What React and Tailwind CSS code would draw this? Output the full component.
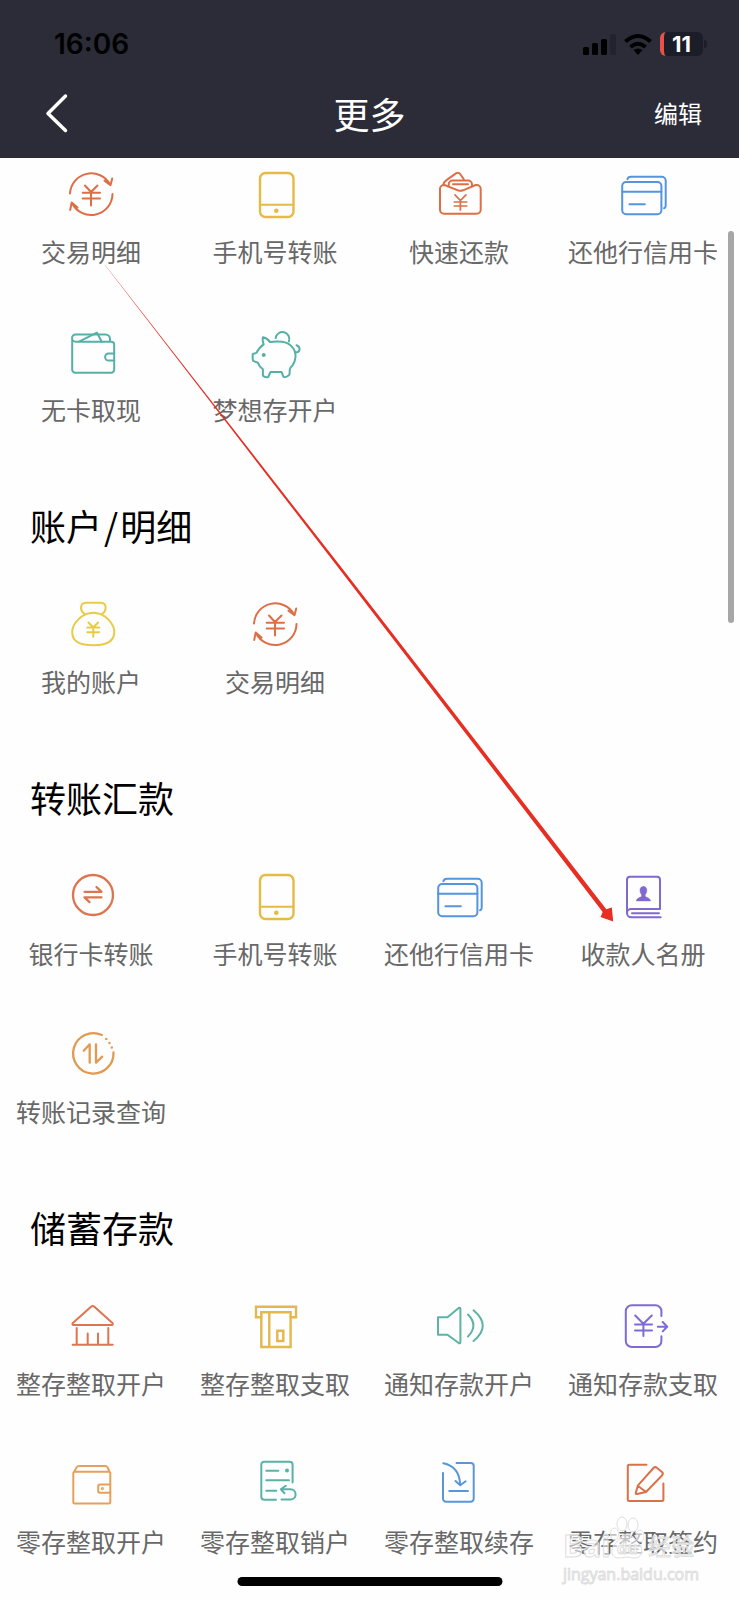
const Icon = ({ children, className }) => (
    <svg
        viewBox="0 0 48 48"
        className={`w-12 h-12 overflow-visible ${className}`}
        fill="none"
        stroke="currentColor"
        strokeWidth="2"
        strokeLinecap="round"
        strokeLinejoin="round"
        aria-hidden="true"
    >
        {children}
    </svg>
);

const TradeIcon = () => (
    <Icon className="text-[#dd6f47]">
        <path d="M3 22.5A21.3 21.3 0 0 1 43 13.5M45.2 7.5l-1.7 6.8-6-4.6" />
        <path d="M45.5 23A21.3 21.3 0 0 1 5 32M3.2 39l1.5-7.5 5.8 5" />
        <path d="M18 14.5l6 6.5 6.500-6.500M24 21v13.500M15.700 21.700H33M15.700 27.500H33" />
    </Icon>
);

const PhoneIcon = () => (
    <Icon className="text-[#e6bb45]">
        <rect x="9" y="2" width="33.500" height="44" rx="5.500" strokeWidth="2.400" />
        <path d="M9 33.700H42.500" />
        <circle cx="25.300" cy="39.700" r="1.300" fill="currentColor" />
    </Icon>
);

const RepayIcon = () => (
    <Icon className="text-[#dd6f47]">
        <path d="M9.500 14H9a4 4 0 0 0-4 4v20.700a4 4 0 0 0 4 4h32.700a4 4 0 0 0 4-4V18a4 4 0 0 0-4-4h-1L28 19.300q-2.600 1-5 0L9.500 14" />
        <path d="M13.700 15v-1.500a4 4 0 0 1 4-4H33a4 4 0 0 1 4 4V15" />
        <path d="M8.500 13.500q.3-2.500 3-4.400L21 2.400q2.500-1.700 4.200.6l3.600 5.200M18 13.300h15" />
        <path d="M20 23.800l5.400 5.700 5.600-5.700M25.400 29.500V39M19.300 31h12.400M19.300 35h12.400" strokeWidth="1.700" />
    </Icon>
);

const CardsIcon = () => (
    <Icon className="text-[#5595df]">
        <rect x="3.200" y="11" width="39.200" height="32.300" rx="4" />
        <path d="M3.200 20.700h39.200M10.400 33.200h15.400" />
        <path d="M8.400 8.300q.6-2.600 3.600-2.600h30.700a4 4 0 0 1 4 4v25q0 2-1.600 2.600" />
    </Icon>
);

const WalletIcon = () => (
    <Icon className="text-[#55b0a8]">
        <path d="M5.200 9v31.700a3 3 0 0 0 3 3h36a3 3 0 0 0 3-3V15.700a3 3 0 0 0-3-3H8.700A3.600 3.600 0 0 1 8.700 5.400H38.500a4.500 4.500 0 0 1 4.500 4.500v2.800" />
        <path d="M12.500 12.300L30 3.700l4.700 9M47.200 24.400h-5.500a3.600 3.600 0 0 0 0 7.200h5.500" />
    </Icon>
);

const PiggyIcon = () => (
    <Icon className="text-[#55b0a8]">
        <path d="M12.200 8.300q4.200.9 6.800 4.800Q25 12 31 12.800C39.500 14 45 20 44.500 28q-.4 5-2.800 8.200-2.700 2.300-2.900 4.300l-.3 5.200q-3 3.300-6 2.200L30.500 43h-11l-2.300 5q-3 .8-5.300-1.300v-6.500q-3.700-2.700-5-6.400l-4.800-1.900q-.8-3.700-.3-6.900l3.700-1.100q2.300-5.300 7.200-8.600-1.500-3.500-.8-7z" />
        <path d="M24.600 9a6.900 6.900 0 1 1 13.300 3.400M44.300 23.500q3.300.2 4.200-2.600.5-3.200-3-4.600" />
        <circle cx="12.700" cy="26" r="1" />
    </Icon>
);

const MoneyBagIcon = () => (
    <Icon className="text-[#e9cb45]">
        <path d="M26.300 11.700C38 11.700 47.300 23 47.300 31c0 10-8 13.300-21 13.300S5.200 41 5.200 31c0-8 9.400-19.300 21.100-19.300z" />
        <path d="M18 13.500q-4-3.200-4-6.500 0-5.200 5.300-5.200h14.200q5.200 0 5.200 5.200 0 3.300-4 6.500" />
        <path d="M21.500 21.500l4.800 5 4.800-5M26.300 26.500v9.200M20.300 26.500h12M20.300 31.300h12" />
    </Icon>
);

const TransferIcon = () => (
    <Icon className="text-[#dd7650]">
        <circle cx="26" cy="22" r="20" strokeWidth="2.300" />
        <path d="M17.500 18.800h17l-5-4.800M34.500 24.300h-17l5 4.800" strokeWidth="2.300" />
    </Icon>
);

const BookIcon = () => (
    <Icon className="text-[#8069cf]">
        <path d="M41 36V6.700a3 3 0 0 0-3-3H11a3 3 0 0 0-3 3V40a4.300 4.300 0 0 0 4.300 4.300h29.400M41 36H12a4 4 0 0 0-4 4M13 40.200h27" />
        <path
            d="M24.400 13.500c2.300 0 3.400 1.500 3.400 3.800s-.9 3.500-1.600 4.400v1.600c1 1.300 4.700 1.400 5.300 4.600H17.300c.6-3.200 4.300-3.300 5.300-4.600v-1.600c-.7-.9-1.600-2.100-1.600-4.400s1.100-3.800 3.400-3.800z"
            fill="currentColor"
            strokeWidth="0.500"
        />
    </Icon>
);

const RecordIcon = () => (
    <Icon className="text-[#e29a50]">
        <path d="M46.500 21.500A20.200 20.200 0 1 1 34.800 4M22.700 31.700V13.300l-6 6.400M29 13.300v18.400l6.200-6" strokeWidth="2.300" />
        <path d="M39.300 8h.01M42.500 12h.01M44.800 16.400h.01" strokeWidth="2.500" />
    </Icon>
);

const BankIcon = () => (
    <Icon className="text-[#dd7650]">
        <path d="M24 3.700q1.700-1.400 3.400 0L45.700 20.300q.6 1.600-1 1.800H6.600q-1.600-.2-1-1.800z" />
        <path d="M9.700 25v16M20.700 30.500V41M31 30.500V41M41.300 25v16M5.700 41.700h40" />
    </Icon>
);

const AtmIcon = () => (
    <Icon className="text-[#e3b84d]">
        <path d="M10.300 14.300H5V3.700h40v10.600h-5.400" strokeLinejoin="miter" strokeWidth="2.400" />
        <path d="M10.300 9.300h29.300V44H10.300zM18.300 9.300V44M26.300 27.700h6V38h-6z" strokeLinejoin="miter" strokeWidth="2.400" />
    </Icon>
);

const SpeakerIcon = () => (
    <Icon className="text-[#5db3a4]">
        <path d="M3 14.300h9.500L23.700 5q1.700-.9 1.700 1v33q0 1.900-1.700 1L12.500 31.700H3z" />
        <path d="M33 11.500q10.800 11 0 22M38.500 7.300q18.500 15.600 0 30.700" />
    </Icon>
);

const WithdrawIcon = () => (
    <Icon className="text-[#806bd3]">
        <path d="M42.400 13V8.300a6 6 0 0 0-6-6H12.800a6 6 0 0 0-6 6V38a6 6 0 0 0 6 6h23.600a6 6 0 0 0 6-6v-4.700" />
        <path d="M38.800 23.700h8.700M43.700 19l4.500 4.700-4.500 4.700" />
        <path d="M16.200 12.500l8.200 8.300 8.400-8.300M24.400 21v12M16 21.500h17M16 27.500h17" />
    </Icon>
);

const PurseIcon = () => (
    <Icon className="text-[#e5a15c]">
        <rect x="6.300" y="10.700" width="37" height="31.800" rx="1.500" />
        <path d="M7.600 10l2-3.500q.9-1.500 2.500-1.500h26q1.700 0 2.500 1.500l1.700 3.500M43.300 23.500H32.900q-1.700 0-1.700 1.700v4.800q0 1.700 1.700 1.700h10.400" />
        <circle cx="35.400" cy="27.600" r="0.600" />
    </Icon>
);

const CloseOutIcon = () => (
    <Icon className="text-[#58b2a8]">
        <path d="M41.600 21.500V3.700a3 3 0 0 0-3-3H13.300a3 3 0 0 0-3 3v32a3 3 0 0 0 3 3H25" />
        <path d="M15.300 9.700h12M15.300 19.300H38M15.300 29.700h10M30.500 38.500h9a5 5 0 0 0 0-10.200h-9.700M34.800 24.800l-5 3.500 3.700 4" />
        <circle cx="36" cy="9.500" r="1" />
    </Icon>
);

const DepositIcon = () => (
    <Icon className="text-[#5a97d9]">
        <path d="M8 12v25.700a3 3 0 0 0 3 3h24.700a3 3 0 0 0 3-3V5a3 3 0 0 0-3-3H21.500" />
        <path d="M8.300 2.300Q24.500 5.500 25.200 24M20.500 20l4.700 4.300 5.500-4M14.300 30H33" />
    </Icon>
);

const SignIcon = () => (
    <Icon className="text-[#db7149]">
        <path d="M27.500 3.700H10.300a1.500 1.500 0 0 0-1.500 1.500v33.300a1.500 1.500 0 0 0 1.500 1.500h32.600a1.500 1.500 0 0 0 1.500-1.500V22.500" />
        <path d="M18.800 24.700L34.500 7q1.600-1.600 3.300-.3l5.200 4.400q1.600 1.500.2 3.200L27 31l-9 2q-1.400.2-1.200-1.200zM18.800 24.700L27 31" />
    </Icon>
);

const sections = [
    {
        items: [
            { label: '交易明细', icon: TradeIcon },
            { label: '手机号转账', icon: PhoneIcon },
            { label: '快速还款', icon: RepayIcon },
            { label: '还他行信用卡', icon: CardsIcon },
            { label: '无卡取现', icon: WalletIcon },
            { label: '梦想存开户', icon: PiggyIcon },
        ],
    },
    {
        title: <>账户<span className="mx-0.5">/</span>明细</>,
        items: [
            { label: '我的账户', icon: MoneyBagIcon },
            { label: '交易明细', icon: TradeIcon },
        ],
    },
    {
        title: '转账汇款',
        items: [
            { label: '银行卡转账', icon: TransferIcon },
            { label: '手机号转账', icon: PhoneIcon },
            { label: '还他行信用卡', icon: CardsIcon },
            { label: '收款人名册', icon: BookIcon },
            { label: '转账记录查询', icon: RecordIcon },
        ],
    },
    {
        title: '储蓄存款',
        items: [
            { label: '整存整取开户', icon: BankIcon },
            { label: '整存整取支取', icon: AtmIcon },
            { label: '通知存款开户', icon: SpeakerIcon },
            { label: '通知存款支取', icon: WithdrawIcon },
            { label: '零存整取开户', icon: PurseIcon },
            { label: '零存整取销户', icon: CloseOutIcon },
            { label: '零存整取续存', icon: DepositIcon },
            { label: '零存整取签约', icon: SignIcon },
        ],
    },
];

const StatusBar = () => (
    <div className="flex items-center justify-between h-[88px] pl-[54px] pr-8 text-black">
        <span className="font-['Inter',sans-serif] text-[28px] leading-8 font-semibold">16:06</span>
        <div className="flex items-center gap-2">
            <svg viewBox="0 0 33 22" className="w-[33px] h-[22px]" aria-hidden="true">
                <rect x="0" y="14" width="6" height="8" rx="1.500" />
                <rect x="9" y="10" width="6" height="12" rx="1.500" />
                <rect x="18" y="6" width="6" height="16" rx="1.500" />
                <rect x="27" y="1" width="6" height="21" rx="1.500" fill="#22232f" />
            </svg>
            <svg viewBox="0 0 28 22" className="w-7 h-[22px]" fill="none" stroke="black" strokeWidth="4" aria-hidden="true">
                <path d="M1.500 8.500Q14-2.500 26.500 8.500" />
                <path d="M6.500 14Q14 7.500 21.500 14" />
                <path d="M14 22l-4.500-5q4.500-3 9 0z" fill="black" stroke="none" />
            </svg>
            <div className="flex items-center">
                <div className="flex items-center justify-center w-[43px] h-6 pr-1 rounded-md border-l-4 border-[#e8524b] bg-[#1b1d28] text-white font-['Inter',sans-serif] text-[22px] leading-6 font-bold">
                    11
                </div>
                <div className="w-[3px] h-2 ml-px rounded-r bg-[#1b1d28]" />
            </div>
        </div>
    </div>
);

const NavBar = () => (
    <div className="grid grid-cols-[1fr_auto_1fr] items-center h-[70px] pb-5 px-[37px] text-white">
        <button type="button" aria-label="返回" className="justify-self-start pl-2">
            <svg viewBox="0 0 24 40" className="w-6 h-10" fill="none" stroke="currentColor" strokeWidth="3.500" strokeLinecap="round" strokeLinejoin="round">
                <path d="M20.500 3L3 20.500l17.500 17" />
            </svg>
        </button>
        <h1 className="text-[36px] leading-[48px]">更多</h1>
        <button type="button" className="justify-self-end text-2xl">编辑</button>
    </div>
);

const Section = ({ title, items }) => (
    <section>
        {title && <h2 className="mt-[74px] mb-[52px] pl-[30px] text-[36px] leading-[48px] text-black">{title}</h2>}
        <div className="grid grid-cols-4 gap-y-[60px] -ml-px mr-1">
            {items.map(({ label, icon: ItemIcon }) => (
                <button key={label} type="button" className="flex flex-col items-center gap-3.5">
                    <ItemIcon />
                    <span className="text-[25px] leading-9 text-[#686868] whitespace-nowrap">{label}</span>
                </button>
            ))}
        </div>
    </section>
);

// Tapered pointer from 交易明细 to 收款人名册
const Arrow = () => (
    <svg viewBox="0 0 510 658" className="absolute left-[104px] top-[264px] w-[510px] h-[658px] pointer-events-none" fill="#e62e22" aria-hidden="true">
        <path d="M0.900 1.100L1.100 0.900L240 306.800L502.300 645.200L507.800 643.500L509.200 657.500L496.500 653L498.700 647.900L238 308.500z" />
    </svg>
);

const Watermark = () => (
    <div
        className="absolute right-10 bottom-4 flex flex-col items-start text-white/50 pointer-events-none font-['Open_Sans','Noto_Sans_CJK_SC',sans-serif] [-webkit-text-stroke:1px_#dedede]"
        aria-hidden="true"
    >
        <div className="flex items-end h-12 text-[30px] leading-9 font-bold">
            <span>Bai</span>
            <svg viewBox="0 0 34 44" className="w-[34px] h-11 mb-1" fill="white" fillOpacity="0.600" stroke="#dedede">
                <ellipse cx="12" cy="8" rx="5" ry="7" />
                <ellipse cx="23" cy="9" rx="5" ry="7" />
                <ellipse cx="4.500" cy="18" rx="4" ry="6" />
                <ellipse cx="30" cy="20" rx="4" ry="6" />
                <path d="M17 18c6 0 8 6 12 10 5 5 3 14-4 14-4 0-5-1-8-1s-5 1-9 1c-7 0-8-9-3-14 4-4 6-10 12-10z" />
                <text x="7" y="38" fontSize="16" fontWeight="700">du</text>
            </svg>
            <span className="ml-1 text-[23px] font-normal">经验</span>
        </div>
        <span className="text-base leading-5">jingyan.baidu.com</span>
    </div>
);

export default function App() {
    return (
        <div className="relative min-h-screen overflow-hidden bg-[#fefefe] font-['Noto_Sans_CJK_SC',sans-serif]">
            <header className="bg-[#2b2c38]">
                <StatusBar />
                <NavBar />
            </header>

            <main className="pt-[13px] pb-9">
                {sections.map((section, i) => (
                    <Section key={i} {...section} />
                ))}
            </main>

            <Arrow />
            <div className="absolute right-[5px] top-[231px] w-1.5 h-[392px] rounded-full bg-[#a6a6a6]" />
            <Watermark />
            <div className="absolute left-1/2 bottom-3.5 w-[265px] h-[9px] -translate-x-1/2 rounded-full bg-black" />
        </div>
    );
}
